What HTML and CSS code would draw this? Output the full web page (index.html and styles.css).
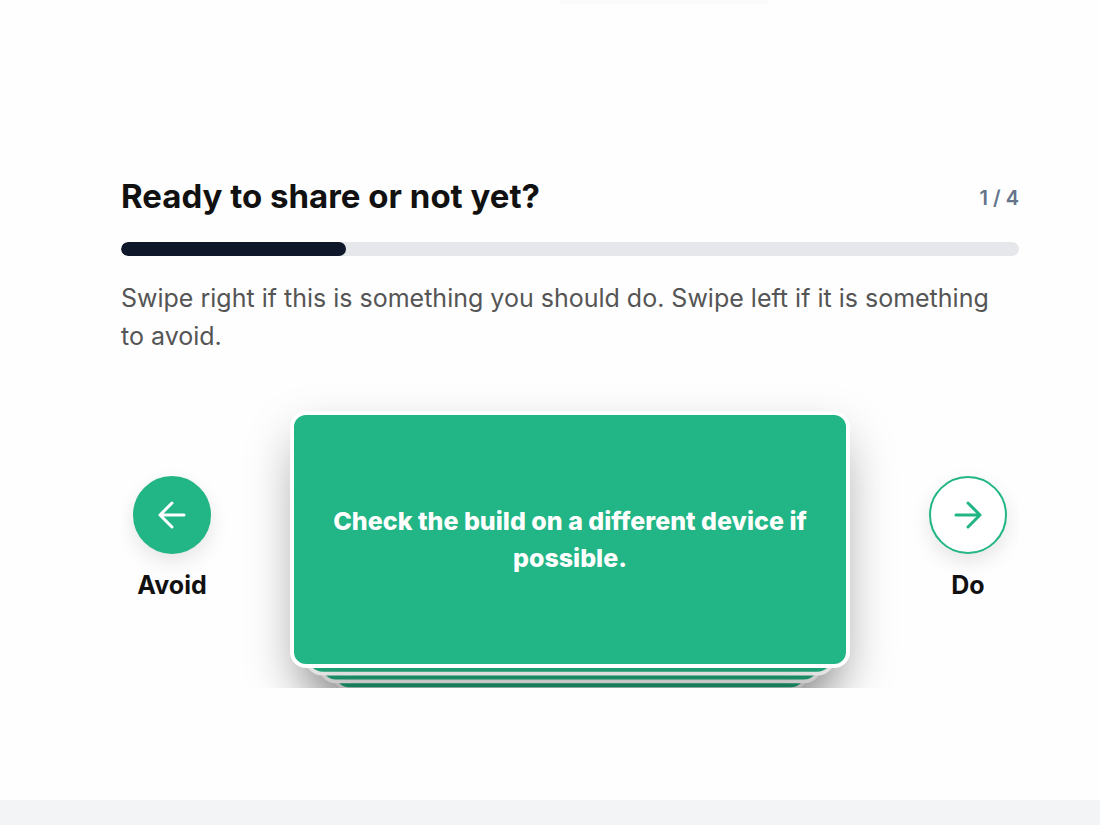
FILE: index.html
```html
<!DOCTYPE html>
<html lang="en">
<head>
<meta charset="UTF-8" />
<meta name="viewport" content="width=device-width, initial-scale=1" />
<title>Ready to share or not yet?</title>
<link rel="stylesheet" href="styles.css">
</head>
<body>

  <!-- End of the previous block -->
  <div class="prev-edge"></div>

  <main class="activity">
    <header class="activity-header">
      <h2 id="activityTitle">Ready to share or not yet?</h2>
      <span class="counter">1 / 4</span>
    </header>

    <div class="progress" role="progressbar" aria-labelledby="activityTitle" aria-valuemin="0" aria-valuemax="4" aria-valuenow="1">
      <div class="progress-fill" style="width: 25%"></div>
    </div>

    <p class="instructions">Swipe right if this is something you should do. Swipe left if it is something to avoid.</p>

    <section class="swipe">
      <div class="choice">
        <button class="choice-btn filled" id="avoidBtn" type="button" aria-labelledby="avoidLabel">
          <svg viewBox="0 0 28 28" width="28" height="28" aria-hidden="true"><path d="M26 14H2M14 2L2 14l12 12" /></svg>
        </button>
        <label id="avoidLabel" for="avoidBtn">Avoid</label>
      </div>

      <div class="deck">
        <div class="card back back-3"></div>
        <div class="card back back-2"></div>
        <div class="card back back-1"></div>
        <div class="card front">Check the build on a different device if possible.</div>
      </div>

      <div class="choice">
        <button class="choice-btn" id="doBtn" type="button" aria-labelledby="doLabel">
          <svg viewBox="0 0 28 28" width="28" height="28" aria-hidden="true"><path d="M2 14h24M14 2l12 12-12 12" /></svg>
        </button>
        <label id="doLabel" for="doBtn">Do</label>
      </div>
    </section>
  </main>

  <footer class="next-block"></footer>

</body>
</html>
```
FILE: styles.css
```css
* {
  box-sizing: border-box;
}
body {
  margin: 0;
  min-height: 100vh;
  display: flex;
  flex-direction: column;
  font-family: Inter, "Liberation Sans", sans-serif;
  background: #fefefe;
  color: #111;
}
.prev-edge {
  width: 208px;
  height: 4px;
  margin-left: 560px;
  background: #fafafa;
}
.activity {
  padding: 168px 81px 112px 121px;
}

/* Title and progress */
.activity-header {
  display: flex;
  align-items: center;
  justify-content: space-between;
  margin-bottom: 22px;
}
h2 {
  margin: 0;
  font-size: 33px;
  font-weight: 700;
  line-height: 48px;
}
.counter {
  padding-top: 4px;
  font-size: 20px;
  font-weight: 600;
  line-height: 28px;
  color: #64748b;
}
.progress {
  height: 14px;
  border-radius: 7px;
  background: #e5e7eb;
  overflow: hidden;
}
.progress-fill {
  height: 100%;
  border-radius: 7px;
  background: #0f172a;
}
.instructions {
  margin: 23px 0 20px;
  padding-right: 20px;
  font-size: 25px;
  line-height: 38px;
  color: #555;
}

/* Swipe area, clips the deck and its shadow at the bottom */
.swipe {
  display: flex;
  justify-content: space-between;
  align-items: flex-start;
  padding: 36px 0 20px;
  overflow: hidden;
}
.choice {
  width: 102px;
  padding-top: 65px;
  display: flex;
  flex-direction: column;
  align-items: center;
  gap: 12px;
}
.choice-btn {
  width: 78px;
  height: 78px;
  padding: 0;
  display: flex;
  align-items: center;
  justify-content: center;
  border: 2px solid #22b585;
  border-radius: 50%;
  background: #fff;
  color: #22b585;
  box-shadow: 0 8px 20px rgba(0, 0, 0, 0.1);
  cursor: pointer;
}
.choice-btn.filled {
  background: #22b585;
  color: #fff;
}
.choice-btn svg {
  fill: none;
  stroke: currentColor;
  stroke-width: 3;
  stroke-linecap: round;
  stroke-linejoin: round;
}
.choice label {
  font-size: 25px;
  font-weight: 700;
  line-height: 38px;
}
.deck {
  position: relative;
  width: 560px;
  height: 257px;
}
.card {
  position: absolute;
  inset: 0;
  display: flex;
  align-items: center;
  justify-content: center;
  padding: 0 32px;
  border: 4px solid #fff;
  border-radius: 16px;
  background: #22b585;
  color: #fff;
  font-size: 25px;
  font-weight: 800;
  line-height: 37px;
  text-align: center;
  box-shadow: 0 20px 50px rgba(0, 0, 0, 0.18);
}
.back {
  border-radius: 20px;
}
.back-1 {
  transform: translateY(14px) scale(0.95);
}
.back-2 {
  transform: translateY(28px) scale(0.9);
}
.back-3 {
  transform: translateY(42px) scale(0.85);
}

.next-block {
  flex: 1;
  min-height: 25px;
  background: #f3f4f6;
}
```
